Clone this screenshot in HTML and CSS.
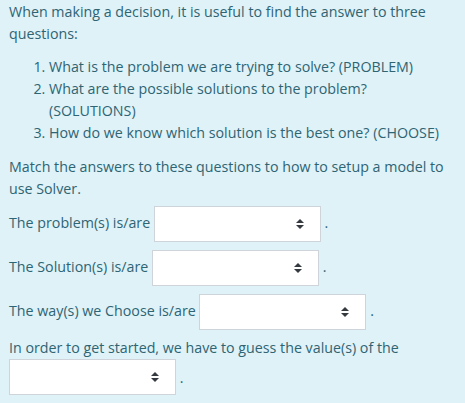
FILE: index.html
```html
<!DOCTYPE html>
<html>
<head>
<meta charset="utf-8">
<link rel="stylesheet" href="styles.css">
</head>
<body>
<div class="formulation">
  <p class="intro">When making a decision, it is useful to find the answer to three questions:</p>
  <ol class="steps">
    <li>What is the problem we are trying to solve? (PROBLEM)</li>
    <li>What are the possible solutions to the problem? (SOLUTIONS)</li>
    <li>How do we know which solution is the best one? (CHOOSE)</li>
  </ol>
  <p class="para">Match the answers to these questions to how to setup a model to use Solver.</p>
  <p class="gap-line first">The problem(s) is/are <span class="control"><select class="gap"><option></option></select><svg class="arrow" viewBox="0 0 4 5" width="8" height="10"><path d="M2 0L0 2h4zm0 5L0 3h4z"/></svg></span> .</p>
  <p class="gap-line">The Solution(s) is/are <span class="control"><select class="gap"><option></option></select><svg class="arrow" viewBox="0 0 4 5" width="8" height="10"><path d="M2 0L0 2h4zm0 5L0 3h4z"/></svg></span> .</p>
  <p class="gap-line">The way(s) we Choose is/are <span class="control"><select class="gap"><option></option></select><svg class="arrow" viewBox="0 0 4 5" width="8" height="10"><path d="M2 0L0 2h4zm0 5L0 3h4z"/></svg></span> .</p>
  <p class="gap-line last">In order to get started, we have to guess the value(s) of the <span class="control tight"><select class="gap"><option></option></select><svg class="arrow" viewBox="0 0 4 5" width="8" height="10"><path d="M2 0L0 2h4zm0 5L0 3h4z"/></svg></span> .</p>
</div>
</body>
</html>
```
FILE: styles.css
```css
html, body {
  margin: 0;
  padding: 0;
  background: #def2f8;
}
.formulation {
  background: #def2f8;
  color: #2f6473;
  font-family: "Open Sans", "Noto Sans", sans-serif;
  font-size: 14.25px;
  line-height: 22px;
  padding: 1px 14px 0 9px;
  box-sizing: border-box;
  width: 465px;
  height: 403px;
}
.intro {
  margin: 0;
}
.steps {
  margin: 11px 0 0 0;
  padding-left: 40px;
}
.para {
  margin: 12px 0 0 0;
}
.gap-line {
  margin: 0;
}
.gap-line.first {
  margin-top: 2px;
}
.gap-line.last {
  margin-top: 3px;
}
.control {
  position: relative;
  display: inline-block;
  vertical-align: middle;
  margin: 4px 0;
}
.control.tight {
  margin-top: 0;
}
.gap {
  display: block;
  appearance: none;
  -webkit-appearance: none;
  width: 167px;
  height: 36px;
  background: #fff;
  border: 1px solid #ced4da;
  border-radius: 0;
  margin: 0;
  padding: 0;
  font: inherit;
}
.arrow {
  position: absolute;
  right: 17px;
  top: 13px;
  fill: #343a40;
}
```
